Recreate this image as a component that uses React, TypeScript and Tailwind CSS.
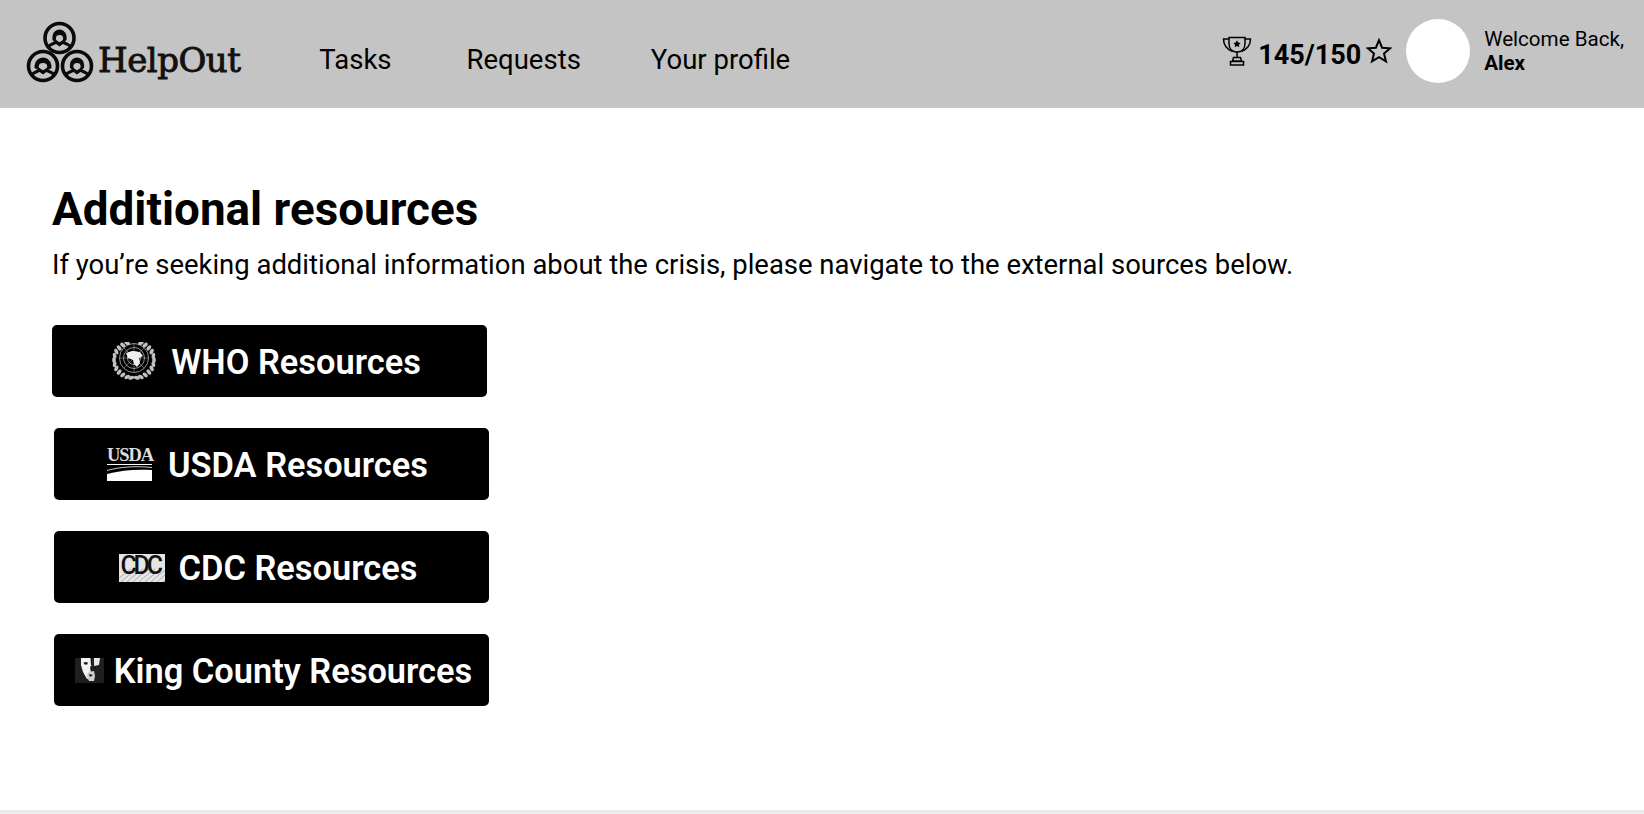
const roboto = "font-['Roboto',sans-serif]";

function Person({ cx, cy, big }: { cx: number; cy: number; big: boolean }) {
  return (
    <g>
      <circle cx={cx} cy={cy} r={14.500} fill="#c4c4c4" stroke="#0a0a0a" strokeWidth={3.600} />
      <path d={`M${cx - (big ? 8.500 : 7)} ${cy + 2}C${cx - 9} ${cy - 12} ${cx + 9} ${cy - 12} ${cx + (big ? 8.500 : 7)} ${cy + 2}L${cx + 4} ${cy + 4.500}H${cx - 4}Z`} fill="#0a0a0a" />
      <ellipse cx={cx} cy={cy + 0.5} rx={big ? 4.200 : 3.600} ry={3.400} fill="#c4c4c4" />
      <path d={`M${cx - 11.500} ${cy + 9.500}C${cx - 9} ${cy + 5} ${cx - 5} ${cy + 6} ${cx - 3.500} ${cy + 4}L${cx} ${cy + 6.500}L${cx + 3.500} ${cy + 4}C${cx + 5} ${cy + 6} ${cx + 9} ${cy + 5} ${cx + 11.500} ${cy + 9.500}`} fill="none" stroke="#0a0a0a" strokeWidth={3.200} />
    </g>
  );
}

function Logo() {
  return (
    <svg width="68" height="62" viewBox="0 0 68 62" className="shrink-0">
      <Person cx={33.500} cy={17} big={false} />
      <Person cx={17} cy={45} big={true} />
      <Person cx={51} cy={45} big={false} />
    </svg>
  );
}

function Trophy() {
  return (
    <svg width="30" height="30" viewBox="0 0 30 30" fill="none" stroke="#000" strokeWidth={1.500} className="shrink-0">
      <path d="M7 1.500h16v6c0 5-3 8.500-8 8.500s-8-3.500-8-8.500z" />
      <path d="M7 3H1.500c0 6 3 10 9 12.500M23 3h5.500c0 6-3 10-9 12.500" />
      <path d="M15 16v5M11.500 21.500h7l1 3.500h-9zM8.500 25.500h13v3.500h-13z" />
      <path d="M15 4.200l1.200 2.300 2.500.4-1.800 1.800.4 2.500-2.300-1.200-2.300 1.200.4-2.500-1.800-1.800 2.500-.4z" fill="#000" stroke="none" />
    </svg>
  );
}

function Star() {
  return (
    <svg width="26" height="26" viewBox="0 0 26 26" fill="none" stroke="#000" strokeWidth={2} className="shrink-0">
      <path d="M13 2.200l3.100 7.500 8.100.6-6.200 5.200 2 7.900L13 19.100l-7 4.300 2-7.900-6.200-5.200 8.100-.6z" strokeLinejoin="miter" />
    </svg>
  );
}

function UNEmblem() {
  const leaves = [-70, -56, -42, -28, -14, 0, 14, 28, 42, 56, 70, 82];
  return (
    <svg width="46" height="38" viewBox="0 0 46 38" className="shrink-0">
      <g fill="none" stroke="#b5b5b5" strokeWidth={0.800}>
        <circle cx={23} cy={16} r={14.500} />
        <circle cx={23} cy={16} r={10.500} />
        <circle cx={23} cy={16} r={6.500} />
        <path d="M23 1.500v29M8.500 16h29M12.700 5.700l20.600 20.600M33.300 5.700l-20.600 20.600" strokeWidth={0.500} />
      </g>
      <path d="M15 11l6-2 8 1 3 4-4 2 1 5-3 4-3-3-1-4-5-2z" fill="#f0f0f0" />
      {leaves.map((t) => {
        const a = (t * Math.PI) / 180;
        const x = 23 - 20 * Math.cos(a);
        const y = 18 + 18 * Math.sin(a);
        return (
          <g key={t} fill="#c2c2c2">
            <ellipse cx={x} cy={y} rx={1.800} ry={3} transform={`rotate(${t * 0.9} ${x} ${y})`} />
            <ellipse cx={46 - x} cy={y} rx={1.800} ry={3} transform={`rotate(${-t * 0.9} ${46 - x} ${y})`} />
          </g>
        );
      })}
    </svg>
  );
}

function USDALogo() {
  return (
    <div className="flex flex-col w-[45px] shrink-0">
      <span className="font-['Liberation_Serif',serif] text-[18.500px] leading-[15px] tracking-[-1.100px] text-[#dddddd] text-center">USDA</span>
      <svg width="45" height="17" viewBox="0 0 45 17" className="mt-[1px]">
        <path d="M0 0.500h45" stroke="#fff" strokeWidth={1} />
        <path d="M0 6.500C14 2.500 30 2 45 3.500" stroke="#fff" strokeWidth={0.800} fill="none" />
        <path d="M0 10C14 6 30 5 45 6V17H0z" fill="#fff" />
      </svg>
    </div>
  );
}

function CDCLogo() {
  const lines = [0, 1, 2, 3, 4, 5, 6, 7, 8, 9];
  return (
    <div className="relative w-[46px] h-[28px] mt-[1px] bg-[#e6e6e6] shrink-0 flex items-center justify-center">
      <svg width="46" height="28" viewBox="0 0 46 28" className="absolute left-0 top-0">
        {lines.map((i) => (
          <path key={i} d={`M${i * 6 - 4} 28C${i * 6 + 2} 22 ${i * 6 + 8} 18 ${i * 6 + 12} 15`} stroke="#9a9a9a" strokeWidth={0.800} fill="none" />
        ))}
      </svg>
      <span className="relative font-['Roboto',sans-serif] font-medium text-[25px] leading-[24px] tracking-[-3.200px] pr-[3px] mb-[4px] text-[#111]">CDC</span>
    </div>
  );
}

function KingLogo() {
  return (
    <svg width="29" height="25" viewBox="0 0 29 25" className="shrink-0">
      <rect width="29" height="25" fill="#1f1f1f" />
      <path d="M6 0H18L17 7 15 9 16 15 15 21 12 21 8 14 6 7Z" fill="#f2f2f2" />
      <path d="M8.500 4.500l4-.5v2.500H9.500zM15.500 0H18l-.5 6.500-1.500 1z" fill="#111" />
      <path d="M19 0h6l-1 7-5 1z" fill="#e8e8e8" />
      <path d="M13 14l6-1 1 5-1 5h-5l-2-4z" fill="#d0d0d0" />
      <path d="M14 16l4 1-3 2z" fill="#111" />
    </svg>
  );
}

function ResourceButton({ label, icon, gap, offset, mt }: { label: string; icon: React.ReactNode; gap: string; offset: string; mt: string }) {
  return (
    <a className={`flex items-center justify-center w-[435px] h-[72px] bg-black rounded-[5px] text-white font-semibold text-[34.400px] ${gap} ${offset} ${mt}`}>
      {icon}
      <span className="mt-[4px]">{label}</span>
    </a>
  );
}

export default function App() {
  return (
    <div className={`${roboto} h-[814px] flex flex-col bg-white text-black overflow-hidden`}>
      <header className="h-[108px] shrink-0 bg-[#c4c4c4] flex items-center pl-[26px] pr-[20px]">
        <div className="flex items-center mb-[4px]">
          <Logo />
          <span className="font-['DejaVu_Serif',serif] text-[34px] tracking-[-0.500px] text-[#111] [-webkit-text-stroke:0.9px_#111] ml-[4px] mt-[17px]">HelpOut</span>
        </div>
        <nav className="flex items-center ml-[79px] text-[27.500px] mt-[12px]">
          <a>Tasks</a>
          <a className="ml-[75px]">Requests</a>
          <a className="ml-[70px]">Your profile</a>
        </nav>
        <div className="ml-auto flex items-center mb-[6px]">
          <Trophy />
          <span className="font-bold text-[27px] ml-[6px] mt-[8px]">145/150</span>
          <span className="ml-[5px]"><Star /></span>
          <div className="w-[64px] h-[64px] rounded-full bg-white ml-[14px]" />
          <div className="ml-[14px] text-[20.600px] leading-[24px]">
            <div>Welcome Back,</div>
            <div className="font-bold">Alex</div>
          </div>
        </div>
      </header>
      <main className="flex-1 pl-[52px] pt-[76px]">
        <h1 className="text-[45.800px] leading-[52px] font-bold">Additional resources</h1>
        <p className="text-[27.450px] leading-[32px] mt-[13px]">If you’re seeking additional information about the crisis, please navigate to the external sources below.</p>
        <div className="flex flex-col mt-[44px]">
          <ResourceButton label="WHO Resources" icon={<UNEmblem />} gap="gap-[14px]" offset="pr-[7px]" mt="" />
          <ResourceButton label="USDA Resources" icon={<USDALogo />} gap="gap-[16px]" offset="ml-[2px] pr-[8px]" mt="mt-[31px]" />
          <ResourceButton label="CDC Resources" icon={<CDCLogo />} gap="gap-[14px]" offset="ml-[2px] pr-[7px]" mt="mt-[31px]" />
          <ResourceButton label="King County Resources" icon={<KingLogo />} gap="gap-[10px]" offset="ml-[2px] pl-[4px]" mt="mt-[31px]" />
        </div>
      </main>
      <div className="h-[4px] shrink-0 bg-[#ebebeb]" />
    </div>
  );
}
